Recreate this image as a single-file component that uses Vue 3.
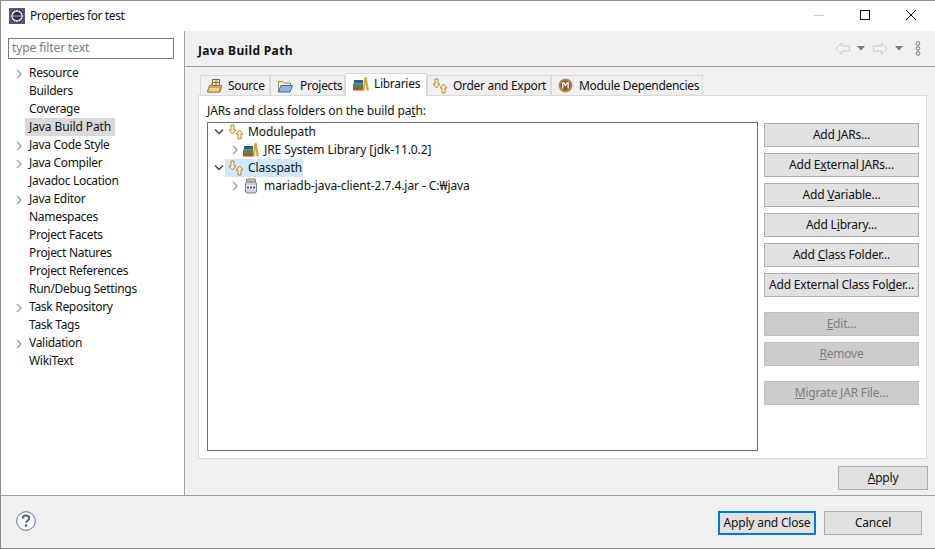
<script setup>
const nav = [
  { t: 'Resource', a: true }, { t: 'Builders' }, { t: 'Coverage' }, { t: 'Java Build Path', sel: true },
  { t: 'Java Code Style', a: true }, { t: 'Java Compiler', a: true }, { t: 'Javadoc Location' },
  { t: 'Java Editor', a: true }, { t: 'Namespaces' }, { t: 'Project Facets' }, { t: 'Project Natures' },
  { t: 'Project References' }, { t: 'Run/Debug Settings' }, { t: 'Task Repository', a: true },
  { t: 'Task Tags' }, { t: 'Validation', a: true }, { t: 'WikiText' }
]
const btns = [
  ['Add ', 'J', 'ARs...'], ['Add E', 'x', 'ternal JARs...'], ['Add ', 'V', 'ariable...'],
  ['Add L', 'i', 'brary...'], ['Add ', 'C', 'lass Folder...'], ['Add External Class Fol', 'd', 'er...']
]
</script>

<template>
  <div class="win">
    <header class="title">
      <svg class="appicon" width="16" height="16" viewBox="0 0 16 16">
        <rect x="0" y="0" width="16" height="16" fill="#5f4f86"/>
        <path d="M8 1l1.400 1.600 2-.6.6 2 2 .6-.6 2L15 8l-1.600 1.400.6 2-2 .6-.6 2-2-.6L8 15l-1.400-1.600-2 .6-.6-2-2-.6.6-2L1 8l1.600-1.400-.6-2 2-.6.6-2 2 .6z" fill="#e8e6ec" stroke="#2b2b2b" stroke-width=".7"/>
        <circle cx="8" cy="8" r="4.300" fill="#34304a"/>
        <rect x="3.800" y="7.400" width="8.400" height="1.300" fill="#8d88a8"/>
      </svg>
      <span class="title-text">Properties for test</span>
      <div class="winbtns">
        <svg width="46" height="30" viewBox="0 0 46 30"><path d="M18 14.500h10" stroke="#ccc"/></svg>
        <svg width="46" height="30" viewBox="0 0 46 30"><rect x="18.500" y="9.500" width="9" height="9" fill="none" stroke="#111"/></svg>
        <svg width="46" height="30" viewBox="0 0 46 30"><path d="M18 9l10 10M28 9L18 19" stroke="#111" fill="none"/></svg>
      </div>
    </header>

    <div class="main">
      <aside class="side">
        <div class="filter">type filter text</div>
        <ul class="nav">
          <li v-for="n in nav" :key="n.t" class="nav-row">
            <svg v-if="n.a" class="chev" width="8" height="10" viewBox="0 0 8 10"><path d="M2 1l4 4-4 4" fill="none" stroke="#a6a6a6" stroke-width="1.500"/></svg>
            <span :class="['nav-text', { sel: n.sel }]">{{ n.t }}</span>
          </li>
        </ul>
      </aside>

      <section class="content">
        <div class="head">
          <h1>Java Build Path</h1>
          <div class="tools">
            <svg width="15" height="13" viewBox="0 0 15 13"><path d="M.8 6.500L6.500 1v3h8v5h-8v3z" fill="#f4f4f4" stroke="#c8c8c8"/></svg>
            <svg class="drop" width="8" height="5" viewBox="0 0 8 5"><path d="M0 0h8L4 4.500z" fill="#7a7a7a"/></svg>
            <svg class="fwd" width="15" height="13" viewBox="0 0 15 13"><path d="M14.200 6.500L8.500 1v3H.5v5h8v3z" fill="#f4f4f4" stroke="#c8c8c8"/></svg>
            <svg class="drop" width="8" height="5" viewBox="0 0 8 5"><path d="M0 0h8L4 4.500z" fill="#7a7a7a"/></svg>
            <svg class="dots" width="6" height="15" viewBox="0 0 6 15"><g fill="none" stroke="#777" stroke-width="1"><circle cx="3" cy="2.500" r="1.800"/><circle cx="3" cy="7.500" r="1.800"/><circle cx="3" cy="12.500" r="1.800"/></g></svg>
          </div>
        </div>

        <div class="body">
          <div class="tabs">
            <div class="tab t-src">
              <svg width="16" height="16" viewBox="0 0 16 16"><path d="M.5 14l2-6.500h2V5.500h8v2H15L13 14z" fill="#efd69a" stroke="#a5803c"/><path d="M5.500 1.500h7v6h-7zM9 1.500v6M5.500 4.500h7" fill="#f6e9c6" stroke="#8a6a30"/><path d="M.5 14l1.500-5h11.500L12 14z" fill="#f0d28c" stroke="#a5803c"/></svg>
              <span>Source</span>
            </div>
            <div class="tab t-prj">
              <svg width="16" height="16" viewBox="0 0 16 16"><path d="M1.500 14V3.500h4.500l1.500 1.500h6v3" fill="#f3e6c3" stroke="#a08b5a"/><path d="M1.500 14l2.500-6.500h11.500L13 14z" fill="#8fb4e2" stroke="#41689e"/></svg>
              <span>Projects</span>
            </div>
            <div class="tab active">
              <svg width="16" height="16" viewBox="0 0 16 16"><rect x="0" y="11" width="11" height="3.500" fill="#a8552a"/><rect x="0" y="7.500" width="10" height="3.500" fill="#3f8f5a"/><rect x="1" y="4" width="9" height="3.500" fill="#2e5f8c"/><path d="M9.500 14.500L11.500 1h2L16 14.500h-2.500L12.500 7l-1 7.500z" fill="#e0a030"/></svg>
              <span>Libraries</span>
            </div>
            <div class="tab t-ord">
              <svg width="16" height="16" viewBox="0 0 16 16"><path d="M3 1h3v5h2L4.500 10 1 6h2z" fill="#fbeec4" stroke="#b58a2a"/><path d="M11.500 6L15 10h-2v5h-3v-5H8z" fill="#fbeec4" stroke="#b58a2a"/></svg>
              <span>Order and Export</span>
            </div>
            <div class="tab t-mod">
              <svg width="16" height="16" viewBox="0 0 16 16"><circle cx="7.500" cy="7.500" r="7" fill="#b78a52"/><circle cx="7.500" cy="7.500" r="5" fill="#87582a"/><path d="M4.800 10.500V5h1.200l1.500 2.500L9 5h1.200v5.500" fill="none" stroke="#fff" stroke-width="1.300"/></svg>
              <span>Module Dependencies</span>
            </div>
          </div>

          <div class="panel">
            <div class="panel-left">
              <div class="lbl">JARs and class folders on the build pa<u>t</u>h:</div>
              <div class="tree">
                <div class="row">
                  <svg class="twist" width="10" height="8" viewBox="0 0 10 8"><path d="M1 1.500l4 4 4-4" fill="none" stroke="#444" stroke-width="1.500"/></svg>
                  <svg class="ic" width="16" height="16" viewBox="0 0 16 16"><path d="M3 1h3v5h2L4.500 10 1 6h2z" fill="#fbeec4" stroke="#b58a2a"/><path d="M11.500 6L15 10h-2v5h-3v-5H8z" fill="#fbeec4" stroke="#b58a2a"/></svg>
                  <span>Modulepath</span>
                </div>
                <div class="row in">
                  <svg class="twist" width="8" height="10" viewBox="0 0 8 10"><path d="M2 1l4 4-4 4" fill="none" stroke="#a6a6a6" stroke-width="1.500"/></svg>
                  <svg class="ic" width="16" height="16" viewBox="0 0 16 16"><rect x="0" y="11" width="11" height="3.500" fill="#a8552a"/><rect x="0" y="7.500" width="10" height="3.500" fill="#3f8f5a"/><rect x="1" y="4" width="9" height="3.500" fill="#2e5f8c"/><path d="M9.500 14.500L11.500 1h2L16 14.500h-2.500L12.500 7l-1 7.500z" fill="#e0a030"/></svg>
                  <span>JRE System Library [jdk-11.0.2]</span>
                </div>
                <div class="row">
                  <svg class="twist" width="10" height="8" viewBox="0 0 10 8"><path d="M1 1.500l4 4 4-4" fill="none" stroke="#444" stroke-width="1.500"/></svg>
                  <span class="hl">
                    <svg class="ic" width="16" height="16" viewBox="0 0 16 16"><path d="M3 1h3v5h2L4.500 10 1 6h2z" fill="#fbeec4" stroke="#b58a2a"/><path d="M11.500 6L15 10h-2v5h-3v-5H8z" fill="#fbeec4" stroke="#b58a2a"/></svg>
                    <span>Classpath</span>
                  </span>
                </div>
                <div class="row in">
                  <svg class="twist" width="8" height="10" viewBox="0 0 8 10"><path d="M2 1l4 4-4 4" fill="none" stroke="#a6a6a6" stroke-width="1.500"/></svg>
                  <svg class="ic" width="16" height="16" viewBox="0 0 16 16"><rect x="3.500" y="1" width="9" height="3" rx="1" fill="#d8c89a" stroke="#8a7a50"/><rect x="2.500" y="4" width="11" height="11" rx="2" fill="#c6d3e6" stroke="#6f809c"/><rect x="3.500" y="7.500" width="9" height="4" fill="#fff"/><path d="M5 8.500v2M8 8.500v2M11 8.500v2" stroke="#223" stroke-width="1.600"/></svg>
                  <span>mariadb-java-client-2.7.4.jar - C:₩java</span>
                </div>
              </div>
            </div>

            <div class="actions">
              <button v-for="b in btns" :key="b.join('')" class="btn">{{ b[0] }}<u>{{ b[1] }}</u>{{ b[2] }}</button>
              <button class="btn off gap"><u>E</u>dit...</button>
              <button class="btn off"><u>R</u>emove</button>
              <button class="btn off gap"><u>M</u>igrate JAR File...</button>
            </div>
          </div>

          <div class="apply-row">
            <button class="btn apply"><u>A</u>pply</button>
          </div>
        </div>
      </section>
    </div>

    <footer class="foot">
      <svg class="help" width="20" height="20" viewBox="0 0 20 20">
        <circle cx="10" cy="10" r="9.300" fill="#fbfbfb" stroke="#5a7099" stroke-width="1"/>
        <path d="M6.800 7.500C6.800 5.500 8.200 4.600 10 4.600s3.200 1 3.200 2.700c0 2.300-3.200 2.500-3.200 4.500" fill="none" stroke="#48618e" stroke-width="2"/>
        <circle cx="10" cy="14.600" r="1.300" fill="#48618e"/>
      </svg>
      <div class="foot-btns">
        <button class="btn primary">Apply and Close</button>
        <button class="btn cancel">Cancel</button>
      </div>
    </footer>
  </div>
</template>

<style scoped>
.win {
  width: 935px;
  height: 549px;
  box-sizing: border-box;
  border: 1px solid #8c8c8c;
  border-right: none;
  background: #f0f0f0;
  display: flex;
  flex-direction: column;
  font: 12px "Noto Sans", "Noto Sans CJK KR", sans-serif;
  color: #111;
  overflow: hidden;
}
.title {
  height: 30px;
  background: #fff;
  display: flex;
  align-items: center;
  padding-left: 8px;
  flex: none;
}
.appicon { flex: none; margin-bottom: 1px; }
.title-text { margin-left: 5px; letter-spacing: -.4px; padding-bottom: 2px; }
.winbtns { margin-left: auto; display: flex; padding-right: 1px; }
.main { flex: 1; display: flex; min-height: 0; }
.side {
  width: 183px;
  flex: none;
  background: #fff;
  border-right: 1px solid #a0a0a0;
  padding-top: 7px;
}
.filter {
  margin-left: 7px;
  width: 161px;
  height: 19px;
  border: 1px solid #7a7a7a;
  line-height: 18px;
  padding-left: 3px;
  color: #7a7a7a;
  letter-spacing: -.1px;
}
.nav { list-style: none; margin: 5px 0 0; padding: 0; letter-spacing: -.3px; }
.nav-row { height: 18px; display: flex; align-items: center; padding-left: 14px; position: relative; }
.chev { position: absolute; left: 14px; top: 5px; }
.nav-text { margin-left: 12px; padding: 0 2px; line-height: 18px; white-space: nowrap; }
.nav-text.sel { background: #d9d9d9; margin-left: 10px; padding: 0 4px 0 4px; letter-spacing: -.1px; }
.content { flex: 1; display: flex; flex-direction: column; min-width: 0; }
.head {
  height: 35px;
  flex: none;
  border-bottom: 1px solid #a0a0a0;
  display: flex;
  align-items: center;
  padding: 0 14px 0 13px;
}
.head h1 { font-size: 12px; font-weight: 700; margin: 3px 0 0; color: #111; letter-spacing: .35px; }
.tools { margin-left: auto; display: flex; align-items: center; }
.drop { margin-left: 7px; }
.fwd { margin-left: 8px; }
.dots { margin-left: 12px; }
.body { flex: 1; padding: 6px 7px 0 13px; display: flex; flex-direction: column; min-height: 0; }
.tabs { display: flex; height: 22px; align-items: flex-end; flex: none; padding-left: 2px; letter-spacing: -.3px; }
.tab {
  height: 20px;
  box-sizing: border-box;
  display: flex;
  align-items: center;
  gap: 5px;
  padding-left: 6px;
  background: #f0f0f0;
  border: 1px solid #d9d9d9;
  border-bottom: none;
  white-space: nowrap;
}
.tab svg { flex: none; }
.tab span { padding-bottom: 1px; }
.t-src { width: 70px; }
.t-prj { width: 75px; }
.t-prj span { margin-left: 2px; }
.t-ord { width: 124px; padding-left: 4px; }
.t-mod { width: 152px; }
.tab.active {
  width: 82px;
  height: 23px;
  background: #fff;
  padding: 0 0 2px 7px;
  position: relative;
  z-index: 1;
  margin-bottom: -1px;
}
.panel {
  height: 364px;
  width: 729px;
  box-sizing: border-box;
  background: #fff;
  border: 1px solid #d9d9d9;
  display: flex;
  flex: none;
  padding: 0 7px 0 8px;
}
.panel-left { width: 551px; flex: none; }
.lbl { height: 26px; line-height: 29px; white-space: nowrap; letter-spacing: -.14px; }
.tree {
  height: 329px;
  box-sizing: border-box;
  border: 1px solid #6e6e6e;
  letter-spacing: -.08px;
}
.row { height: 18px; display: flex; align-items: center; padding-left: 6px; white-space: nowrap; }
.row > span { padding-bottom: 2px; }
.row.in { padding-left: 23px; }
.twist { flex: none; width: 10px; margin-right: 4px; }
.row.in .twist { width: 8px; margin-right: 4px; }
.ic { flex: none; margin-right: 4px; }
.row.in > span { margin-left: 1px; }
.hl { display: flex; align-items: center; background: #cde8ff; height: 18px; padding-right: 1px; margin-left: -3px; padding-bottom: 0 !important; }
.hl .ic { margin-left: 3px; }
.hl span { padding-bottom: 2px; }
.actions { margin-left: 6px; padding-top: 27px; display: flex; flex-direction: column; gap: 6px; flex: none; }
.btn {
  font: inherit;
  color: inherit;
  height: 24px;
  box-sizing: border-box;
  background: #e1e1e1;
  border: 1px solid #adadad;
  padding: 0 0 2px;
  white-space: nowrap;
  text-align: center;
  letter-spacing: -.2px;
}
.actions .btn { width: 155px; }
.btn.off { background: #cccccc; border-color: #bfbfbf; color: #7e7e7e; }
.btn.gap { margin-top: 9px; }
.apply-row { display: flex; justify-content: flex-end; padding: 7px 0 0; }
.btn.apply { width: 90px; }
.foot {
  flex: none;
  height: 37px;
  border-top: 1px solid #a0a0a0;
  display: flex;
  align-items: flex-start;
  padding: 15px 13px 0 15px;
}
.help { flex: none; }
.foot-btns { margin-left: auto; display: flex; gap: 8px; }
.btn.primary { width: 98px; border: 2px solid #0078d7; }
.btn.cancel { width: 98px; }
</style>
